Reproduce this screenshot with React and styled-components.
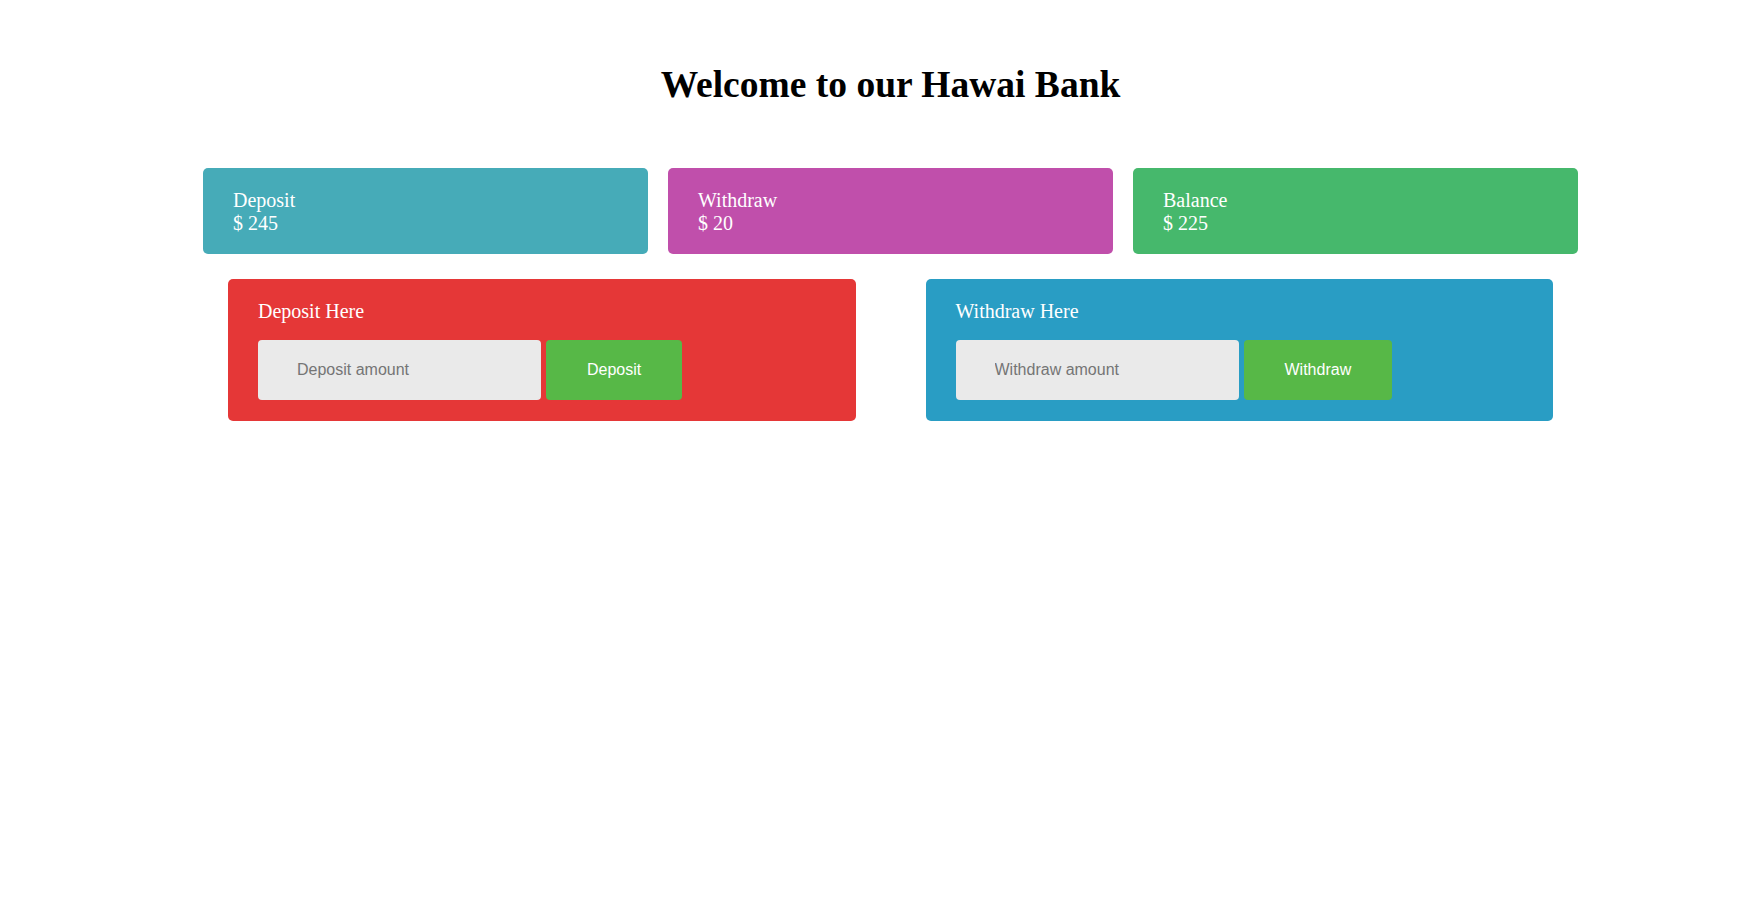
import React, { useState } from 'react'
import styled, { createGlobalStyle } from 'styled-components'

const Global = createGlobalStyle`
body{
  margin: 0;
  padding-left: 29px;
  background: #fff;
  font-family: "Liberation Serif", "Times New Roman", serif;
}
`

function App() {
  const [deposit] = useState(245)
  const [withdraw] = useState(20)

  return (
    <Page>
      <Global />
      <Title>Welcome to our Hawai Bank</Title>
      <Wrap>
        <Stats>
          <Stat bg='#46abb8'>
            <p>Deposit</p>
            <p>$ {deposit}</p>
          </Stat>
          <Stat bg='#c04fab'>
            <p>Withdraw</p>
            <p>$ {withdraw}</p>
          </Stat>
          <Stat bg='#46b86c'>
            <p>Balance</p>
            <p>$ {deposit - withdraw}</p>
          </Stat>
        </Stats>
        <Forms>
          <FormCard bg='#e53737'>
            <h4>Deposit Here</h4>
            <FormRow>
              <Field type='text' placeholder='Deposit amount' />
              <Btn>Deposit</Btn>
            </FormRow>
          </FormCard>
          <FormCard bg='#299dc4'>
            <h4>Withdraw Here</h4>
            <FormRow>
              <Field type='text' placeholder='Withdraw amount' />
              <Btn>Withdraw</Btn>
            </FormRow>
          </FormCard>
        </Forms>
      </Wrap>
    </Page>
  )
}
export default App

const Page = styled.div`
width: 100%;
padding-top: 63px;
`
const Title = styled.h1`
margin: 0;
text-align: center;
font-size: 37.5px;
font-weight: bold;
color: #000;
`
const Wrap = styled.div`
width: 1375px;
margin: 62px auto 0;
`
const Stats = styled.div`
display: grid;
grid-template-columns: repeat(3, 1fr);
gap: 20px;
`
const Stat = styled.div`
background: ${p => p.bg};
color: #fff;
border-radius: 5px;
padding: 21px 30px 19px;
font-size: 20px;

p{
  margin: 0;
}
`
const Forms = styled.div`
display: flex;
gap: 70px;
padding: 0 25px;
margin-top: 25px;
`
const FormCard = styled.div`
flex: 1;
box-sizing: border-box;
background: ${p => p.bg};
color: #fff;
border-radius: 5px;
padding: 21px 30px 21px;

h4{
  margin: 0;
  font-size: 20px;
  font-weight: normal;
}
`
const FormRow = styled.div`
display: flex;
gap: 5px;
margin-top: 17px;
`
const Field = styled.input`
width: 283px;
height: 60px;
box-sizing: border-box;
padding: 0 39px;
border: none;
border-radius: 4px;
background: #eaeaea;
font-family: "Liberation Sans", Arial, sans-serif;
font-size: 16px;
color: #333;
outline: none;

&::placeholder{
  color: #757575;
}
`
const Btn = styled.button`
height: 60px;
padding: 0 41px;
border: none;
border-radius: 4px;
background: #57b847;
color: #fff;
font-family: "Liberation Sans", Arial, sans-serif;
font-size: 16px;
cursor: pointer;
`
